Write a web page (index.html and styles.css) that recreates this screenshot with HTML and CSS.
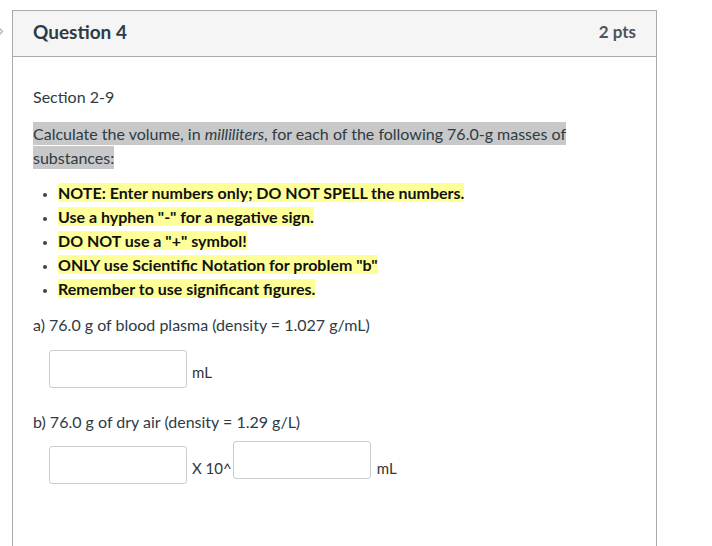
FILE: index.html
```html
<!DOCTYPE html>
<html>
<head>
<meta charset="utf-8">
<link rel="stylesheet" href="styles.css">
</head>
<body>
<div class="page">
  <div class="gutter">
    <svg class="chev" width="12" height="46" viewBox="0 0 12 46"><polyline points="-1,18 2.5,21.5 -1,25" fill="none" stroke="#a9b8c6" stroke-width="1.4"/></svg>
  </div>
  <div class="card">
    <div class="card-header">
      <span class="q-title">Question 4</span>
      <span class="q-pts">2 pts</span>
    </div>
    <div class="card-body">
      <p class="section">Section 2-9</p>
      <p class="intro"><span class="hl-gray">Calculate the volume, in <em>milliliters</em>, for each of the following 76.0-g masses of substances:</span></p>
      <ul class="notes">
        <li><span class="hl-yellow">NOTE: Enter numbers only; DO NOT SPELL the numbers.</span></li>
        <li><span class="hl-yellow">Use a hyphen "-" for a negative sign.</span></li>
        <li><span class="hl-yellow">DO NOT use a "+" symbol!</span></li>
        <li><span class="hl-yellow">ONLY use Scientific Notation for problem "b"</span></li>
        <li><span class="hl-yellow">Remember to use significant figures.</span></li>
      </ul>
      <p class="prob">a) 76.0 g of blood plasma (density = 1.027 g/mL)</p>
      <div class="answer-row row-a">
        <input class="ans" type="text">
        <span class="unit">mL</span>
      </div>
      <p class="prob prob-b">b) 76.0 g of dry air (density = 1.29 g/L)</p>
      <div class="answer-row row-b">
        <input class="ans" type="text">
        <span class="unit x10">X 10^</span>
        <input class="ans sup" type="text">
        <span class="unit unit-b">mL</span>
      </div>
    </div>
  </div>
</div>
</body>
</html>
```

FILE: styles.css
```css
* { box-sizing: border-box; }
html, body { margin: 0; padding: 0; background: #fff; overflow: hidden; }
body {
  font-family: Lato, "Open Sans", sans-serif;
  color: #2d3b45;
}
.page {
  display: flex;
  align-items: flex-start;
  padding-top: 10px;
}
.gutter {
  width: 12px;
  flex: none;
}
.chev { display: block; }
.card {
  width: 645px;
  flex: none;
  border: 1px solid #ababab;
  border-bottom: none;
}
.card-header {
  height: 46px;
  background: #f5f5f5;
  border-bottom: 1px solid #ababab;
  display: flex;
  align-items: center;
  justify-content: space-between;
  padding: 0 20px 5px 20px;
}
.q-title {
  font-size: 19px;
  font-weight: 700;
  color: #2d3b45;
}
.q-pts {
  font-size: 17px;
  font-weight: 700;
  color: #4f5357;
}
.card-body {
  padding: 28px 20px 100px 20px;
  font-size: 16px;
  line-height: 24px;
}
p { margin: 0; }
.intro { margin-top: 13px; }
.hl-gray {
  background: #c8c8c8;
  padding: 2.4px 0;
}
.notes {
  margin: 11px 0 0 0;
  padding-left: 25px;
  font-size: 16px;
  font-weight: 700;
  line-height: 24px;
}
.notes li { color: #3b4650; }
.notes li::marker { font-size: 12px; }
.hl-yellow {
  background: #ffff99;
  color: #111;
}
.prob { margin-top: 12px; }
.prob-b { margin-top: 22px; }
.answer-row {
  display: flex;
  align-items: flex-end;
  padding-left: 16px;
}
.row-a { margin-top: 13px; }
.row-b { margin-top: 7px; }
.ans {
  width: 138px;
  height: 38px;
  border: 1px solid #c7cdd1;
  border-radius: 3px;
  background: #fff;
  margin: 0;
  padding: 0;
  font: inherit;
}
.ans.sup { margin-bottom: 5px; }
.unit {
  font-size: 15px;
  line-height: 15px;
  color: #333;
  margin: 0 0 8px 5px;
}
.x10 { margin-right: 1px; }
.unit-b { margin-left: 6px; }
```
